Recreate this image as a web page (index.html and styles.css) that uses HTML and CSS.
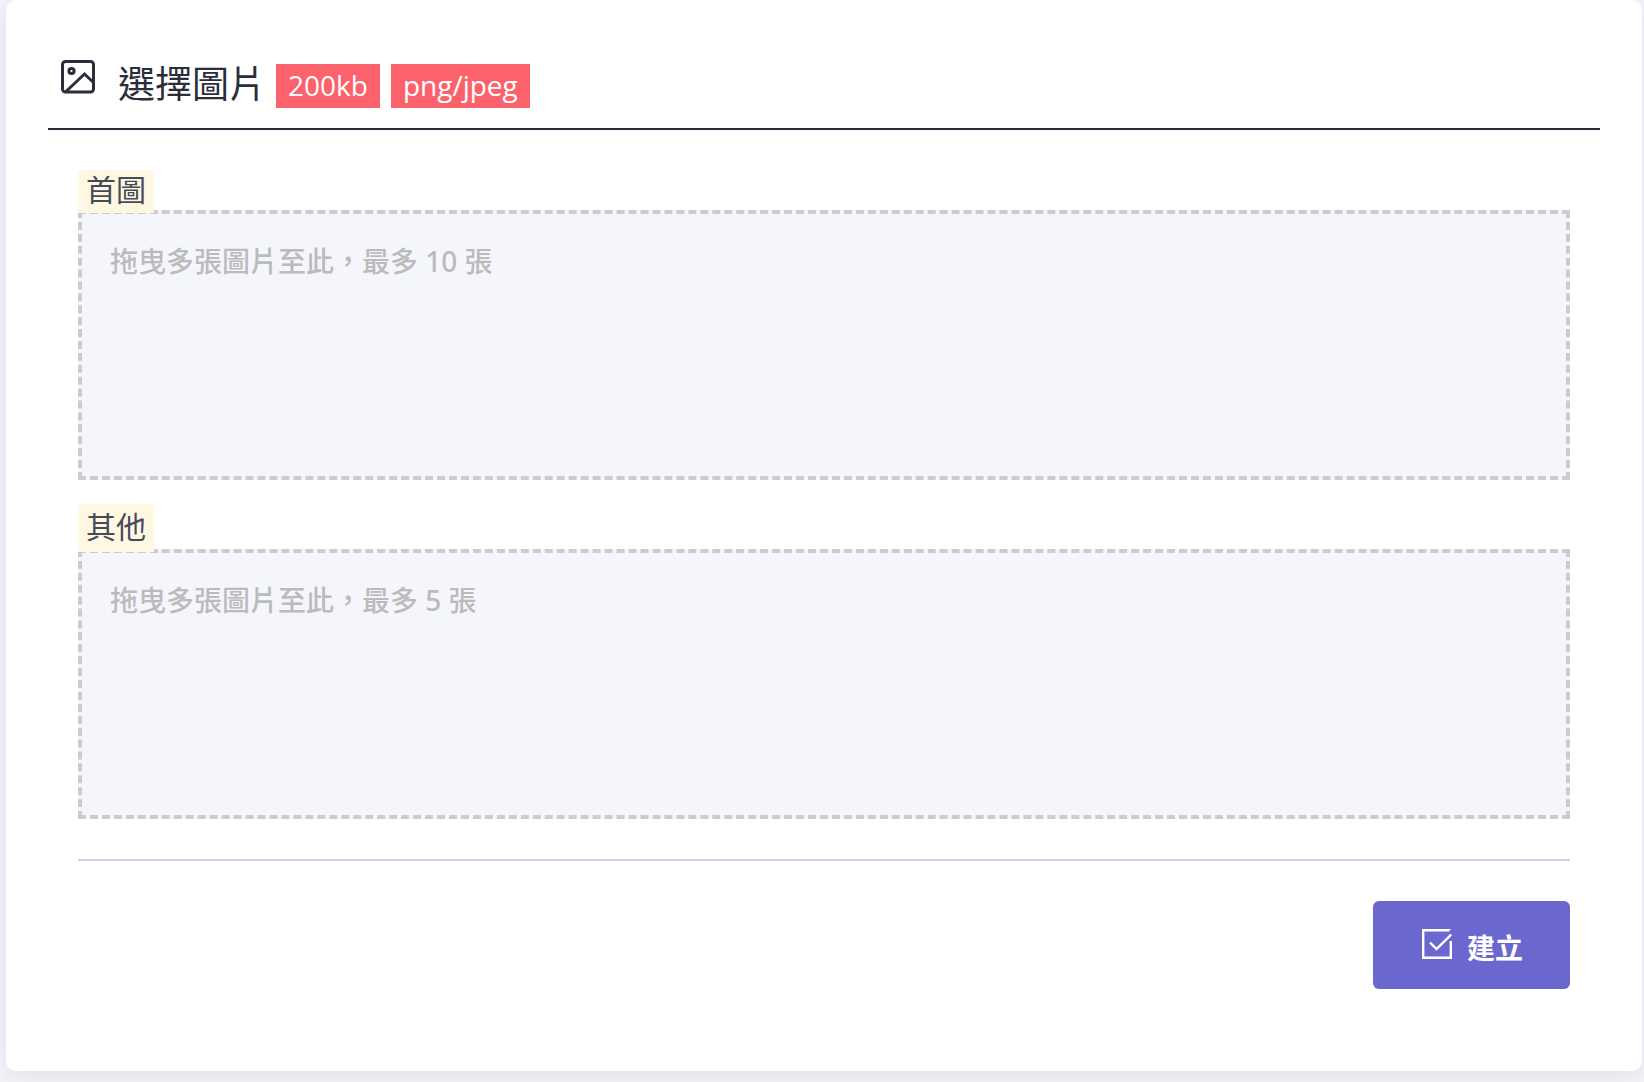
FILE: index.html
```html
<!DOCTYPE html>
<html lang="zh-TW">
<head>
  <meta charset="UTF-8">
  <meta name="viewport" content="width=device-width, initial-scale=1">
  <title>選擇圖片</title>
  <link rel="stylesheet" href="styles.css">
</head>
<body>

  <form class="card">
    <header class="card-header">
      <svg class="icon-image" viewBox="0 0 34 34" fill="none" stroke="currentColor" stroke-width="3">
        <rect x="1.5" y="1.5" width="31" height="30.5" rx="3"/>
        <circle cx="10.5" cy="11" r="2.6"/>
        <path d="M5 31.5 L23.5 14 L32.5 22.5"/>
      </svg>
      <h1>選擇圖片</h1>
      <span class="tag">200kb</span>
      <span class="tag">png/jpeg</span>
    </header>

    <div class="card-body">
      <!-- 首圖 -->
      <div class="field">
        <label class="field-label" for="coverInput">首圖</label>
        <div class="dropzone">
          拖曳多張圖片至此，最多 10 張
          <input class="file-input" id="coverInput" type="file" accept="image/png, image/jpeg" multiple>
        </div>
      </div>

      <!-- 其他 -->
      <div class="field">
        <label class="field-label field-label-tall" for="otherInput">其他</label>
        <div class="dropzone">
          拖曳多張圖片至此，最多 5 張
          <input class="file-input" id="otherInput" type="file" accept="image/png, image/jpeg" multiple>
        </div>
      </div>

      <div class="actions">
        <button class="btn-create" type="submit">
          <svg class="icon-check" viewBox="0 0 30 30" fill="none" stroke="currentColor" stroke-width="2.4">
            <path d="M27 1.2 H1.2 V28.8 H28.8 V12"/>
            <path d="M8 13.5 L14.5 20 L29.2 5.5"/>
            <path d="M26 0 H29 L26.6 2.4 H26 Z" fill="currentColor" stroke="none"/>
          </svg>
          <span class="btn-text">建立</span>
        </button>
      </div>
    </div>
  </form>

</body>
</html>
```

FILE: styles.css
```css
* {
  box-sizing: border-box;
}
body {
  margin: 0;
  padding: 0 2px 11px 6px;
  background: #f4f5fa;
  color: #2b2d3b;
  font-family: "Noto Sans CJK TC", sans-serif;
}
.card {
  padding: 0 42px 82px;
  background: #fff;
  border-radius: 10px;
  box-shadow: 0 4px 24px rgba(34, 41, 47, 0.1);
}
.card-header {
  display: flex;
  align-items: flex-end;
  padding: 60px 13px 20px;
  border-bottom: 2px solid #2b2d3b;
}
.icon-image {
  align-self: flex-start;
  width: 34px;
  height: 34px;
  margin-right: 23px;
}
h1 {
  margin: 0 10px 4px 0;
  font-size: 37px;
  line-height: 44px;
  font-weight: 400;
}
.tag {
  margin-right: 11px;
  padding: 0 12px;
  background: #fb626b;
  color: #fff;
  font-family: "Open Sans", sans-serif;
  font-size: 28px;
  line-height: 42px;
  padding-bottom: 2px;
}
.card-body {
  padding: 40px 30px 0;
}
.field {
  margin-bottom: 24px;
}
/* 標籤下緣壓在虛線框上 */
.field-label {
  display: block;
  position: relative;
  z-index: 1;
  width: fit-content;
  margin-bottom: -3px;
  padding: 0 8px 6px;
  background: #fef8e3;
  color: #464a59;
  font-size: 30px;
  line-height: 37px;
  font-weight: 400;
}
.field-label-tall {
  line-height: 42px;
}
.dropzone {
  min-height: 270px;
  padding: 27px 28px;
  background: #f5f6fc;
  border: 4px dashed #ccc;
  color: #bbb;
  font-family: "Noto Sans", "Noto Sans CJK TC", sans-serif;
  font-size: 28px;
  line-height: 40px;
  font-weight: 500;
}
.file-input {
  position: absolute;
  width: 1px;
  height: 1px;
  opacity: 0;
}
.actions {
  display: flex;
  justify-content: flex-end;
  margin-top: 40px;
  padding-top: 40px;
  border-top: 2px solid #d0d0ea;
}
.btn-create {
  display: flex;
  align-items: center;
  gap: 15px;
  height: 88px;
  padding: 0 47px 2px 49px;
  border: none;
  border-radius: 6px;
  background: #6a67ce;
  color: #fff;
  font-family: inherit;
  font-size: 28px;
  font-weight: 700;
  cursor: pointer;
}
.btn-text {
  padding-top: 6px;
}
.icon-check {
  width: 30px;
  height: 30px;
}
```
